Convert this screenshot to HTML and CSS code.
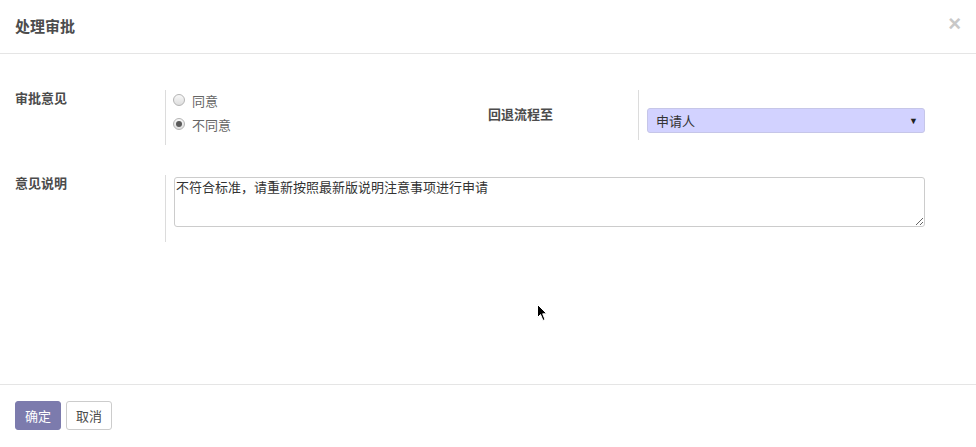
FILE: index.html
```html
<!DOCTYPE html>
<html lang="zh">
<head>
<meta charset="utf-8">
<title>处理审批</title>
<link rel="stylesheet" href="styles.css">
</head>
<body>
<div class="dialog">
  <header class="dlg-header">
    <h4 class="dlg-title">处理审批</h4>
    <span class="dlg-close">×</span>
  </header>
  <main class="dlg-body">
    <div class="form-row">
      <div class="group group-left">
        <div class="label label-top">审批意见</div>
        <div class="field field-radio">
          <div class="radio-item"><span class="radio"></span><span class="radio-text">同意</span></div>
          <div class="radio-item"><span class="radio checked"></span><span class="radio-text">不同意</span></div>
        </div>
      </div>
      <div class="group group-right">
        <div class="label label-mid">回退流程至</div>
        <div class="field field-select">
          <div class="select"><span>申请人</span><span class="caret">▼</span></div>
        </div>
      </div>
    </div>
    <div class="form-row row-2">
      <div class="label label-top">意见说明</div>
      <div class="field field-text">
        <textarea class="textarea">不符合标准，请重新按照最新版说明注意事项进行申请</textarea>
      </div>
    </div>
  </main>
  <footer class="dlg-footer">
    <button class="btn btn-primary">确定</button>
    <button class="btn btn-default">取消</button>
  </footer>
  <svg class="cursor" width="12" height="18" viewBox="0 0 12 18"><path d="M0.5 0.5 L0.5 13.5 L3.5 10.5 L6 16.5 L8 15.5 L5.7 9.8 L9.8 9.8 Z" fill="#000" stroke="#fff" stroke-width="1"/></svg>
</div>
</body>
</html>
```

FILE: styles.css
```css
* { box-sizing: border-box; }
html, body { margin: 0; padding: 0; background: #fff; }
body {
  font-family: "Liberation Sans", "Noto Sans CJK SC", sans-serif;
  font-size: 13px;
  color: #4c4c4c;
}
.dialog { position: relative; width: 976px; height: 447px; display: flex; flex-direction: column; }
.dlg-header {
  height: 54px;
  display: flex;
  align-items: center;
  padding: 0 15px;
  border-bottom: 1px solid #e5e5e5;
}
.dlg-title { margin: 0; font-size: 15px; font-weight: bold; color: #4c4c4c; line-height: 20px; }
.dlg-close { margin-left: auto; margin-top: -6px; margin-right: 0; color: #c8c8c8; font-size: 22px; font-weight: bold; line-height: 20px; }
.dlg-body {
  height: 330px;
  padding: 36px 15px 0;
}
.form-row { display: flex; align-items: flex-start; }
.group { display: flex; align-items: flex-start; }
.group-left { width: 473px; }
.group-right { width: 445px; }
.label { width: 150px; flex: none; font-weight: bold; line-height: 18px; }
.label-mid { padding-top: 16px; }
.field { border-left: 1px solid #dcdcdc; padding: 0 8px; }
.field-radio { padding-bottom: 11px; flex: 1; }
.radio-item { display: flex; align-items: center; height: 20px; margin-bottom: 4px; color: #666; }
.radio-item:last-child { margin-bottom: 0; }
.radio {
  width: 12px; height: 12px; border-radius: 50%;
  border: 1px solid #b4b4b4;
  background: linear-gradient(#f8f8f8, #dedede);
  margin-left: -1px;
  margin-right: 7px;
  display: flex; align-items: center; justify-content: center;
}
.radio.checked::after { content: ""; width: 6px; height: 6px; border-radius: 50%; background: #5a5a5a; }
.field-select { flex: 1; padding-top: 18px; padding-bottom: 7px; }
.select {
  height: 25px;
  background: #d2d2ff;
  border: 1px solid #c6c6e8;
  border-radius: 3px;
  display: flex; align-items: center;
  padding: 0 6px 0 8px;
  color: #333;
}
.caret { margin-left: auto; font-size: 9px; color: #222; }
.row-2 { margin-top: 30px; }
.field-text { flex: 1; padding-top: 2px; padding-bottom: 15px; padding-right: 28px; }
.textarea {
  display: block;
  width: 751px; height: 50px;
  border: 1px solid #ccc;
  border-radius: 3px;
  padding: 1px 1px;
  font-family: "Liberation Sans", "Noto Sans CJK SC", sans-serif;
  font-size: 13px;
  line-height: 18px;
  color: #333;
  resize: vertical;
  margin: 0;
}
.dlg-footer {
  border-top: 1px solid #e5e5e5;
  padding: 16px 15px 0;
  display: flex; gap: 5px; align-items: flex-start;
  flex: 1;
}
.btn {
  height: 29px; width: 46px;
  font-family: "Liberation Sans", "Noto Sans CJK SC", sans-serif;
  font-size: 13px; border-radius: 3px; padding: 0; cursor: pointer;
}
.btn-primary { background: #7c7bad; border: 1px solid #7c7bad; color: #fff; }
.btn-default { background: #fff; border: 1px solid #ccc; color: #4c4c4c; }
.cursor { position: absolute; left: 537px; top: 304px; }
```
